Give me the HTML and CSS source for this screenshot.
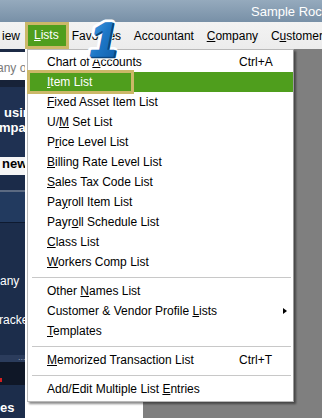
FILE: index.html
```html
<!DOCTYPE html>
<html>
<head>
<meta charset="utf-8">
<link rel="stylesheet" href="styles.css">
</head>
<body>
<div class="titlebar">Sample Rock Castle Construction</div>
<div class="menubar">
  <span class="mi first">iew</span>
  <span class="mi active"><u>L</u>ists</span>
  <span class="mi">Favorites</span>
  <span class="mi">Accountant</span>
  <span class="mi"><u>C</u>ompany</span>
  <span class="mi">C<u>u</u>stomers</span>
</div>
<div class="main">
  <div class="sidebar">
    <div class="sb-top"></div>
    <div class="sb-search">any o</div>
    <div class="sb-dark1"></div>
    <div class="sb-blue"><div class="l1">using</div><div class="l2">mpany</div></div>
    <div class="sb-new">new</div>
    <div class="sb-a"></div>
    <div class="sb-line1"></div>
    <div class="sb-b"></div>
    <div class="sb-line2"></div>
    <div class="sb-c"><div class="t1">any</div><div class="t2">racker</div></div>
    <div class="sb-strip"><span class="dots">...</span></div>
    <div class="sb-dark2"><span class="red"></span></div>
    <div class="sb-d">es</div>
  </div>
  <div class="content"></div>
</div>

<div class="dropdown">
  <div class="row"><span class="lbl">Chart of <u>A</u>ccounts</span><span class="sc">Ctrl+A</span></div>
  <div class="row sel"><span class="lbl"><u>I</u>tem List</span></div>
  <div class="row"><span class="lbl"><u>F</u>ixed Asset Item List</span></div>
  <div class="row"><span class="lbl">U/<u>M</u> Set List</span></div>
  <div class="row"><span class="lbl">P<u>r</u>ice Level List</span></div>
  <div class="row"><span class="lbl"><u>B</u>illing Rate Level List</span></div>
  <div class="row"><span class="lbl"><u>S</u>ales Tax Code List</span></div>
  <div class="row"><span class="lbl">Pa<u>y</u>roll Item List</span></div>
  <div class="row"><span class="lbl">Payr<u>o</u>ll Schedule List</span></div>
  <div class="row"><span class="lbl"><u>C</u>lass List</span></div>
  <div class="row"><span class="lbl"><u>W</u>orkers Comp List</span></div>
  <div class="sep"></div>
  <div class="row"><span class="lbl">Other <u>N</u>ames List</span></div>
  <div class="row"><span class="lbl wide">Customer &amp; Vendor Profile <u>L</u>ists</span><span class="arrow"></span></div>
  <div class="row"><span class="lbl"><u>T</u>emplates</span></div>
  <div class="sep"></div>
  <div class="row"><span class="lbl"><u>M</u>emorized Transaction List</span><span class="sc">Ctrl+T</span></div>
  <div class="sep"></div>
  <div class="row"><span class="lbl wide">Add/Edit Multiple List <u>E</u>ntries</span></div>
  <div class="callout"></div>
</div>

<svg class="badge" width="44" height="46" viewBox="0 0 44 46">
  <defs>
    <linearGradient id="bg1" x1="0" y1="0" x2="1" y2="1">
      <stop offset="0" stop-color="#4ea8ec"/>
      <stop offset="0.5" stop-color="#1d76c6"/>
      <stop offset="1" stop-color="#0e5ca8"/>
    </linearGradient>
  </defs>
  <text x="19" y="39" text-anchor="middle" class="b-out">1</text>
  <text x="20.5" y="40" text-anchor="middle" class="b-deep">1</text>
  <text x="19" y="39" text-anchor="middle" class="b-face">1</text>
</svg>
</body>
</html>
```
FILE: styles.css
```css
html, body {
  margin: 0;
  padding: 0;
}
body {
  width: 322px;
  height: 418px;
  overflow: hidden;
  position: relative;
  background: #7f7f7f;
  font-family: "Liberation Sans", Arial, sans-serif;
  font-size: 12px;
  color: #000;
}
.titlebar {
  height: 22px;
  line-height: 23px;
  padding-left: 251px;
  background: linear-gradient(#95aabd, #7890a7);
  color: #fff;
  font-size: 13px;
  white-space: nowrap;
  overflow: hidden;
}
.menubar {
  height: 27px;
  background: linear-gradient(#f3f3f3, #ececec);
  display: flex;
  align-items: center;
  white-space: nowrap;
  overflow: hidden;
}
.mi {
  flex: none;
  margin-right: 12.8px;
  line-height: 20px;
}
.mi.first {
  margin-left: 2px;
  margin-right: 5px;
}
.mi.active {
  box-sizing: border-box;
  height: 27px;
  line-height: 21px;
  border: 3px solid #cbb868;
  background: #4f9e1d;
  color: #fff;
  padding: 0 7px 0 6px;
  margin-right: 3px;
}
.main {
  display: flex;
  height: 369px;
}
.sidebar {
  width: 25px;
  flex: none;
  display: flex;
  flex-direction: column;
  overflow: hidden;
  background: #1c2d4b;
  white-space: nowrap;
}
.content {
  width: 118px;
  flex: none;
  background: #fff;
}
.sb-top { height: 3px; background: #1c2a45; flex: none; }
.sb-search {
  height: 28px;
  flex: none;
  background: #fff;
  color: #7a7a7a;
  line-height: 32px;
  text-indent: -3px;
}
.sb-dark1 { height: 7px; flex: none; background: #172238; }
.sb-blue {
  height: 70px;
  flex: none;
  box-sizing: border-box;
  padding-top: 18px;
  background: #1f3152;
  color: #fff;
  font-weight: bold;
  font-size: 13px;
  line-height: 15px;
}
.sb-blue .l1 { padding-left: 4px; }
.sb-blue .l2 { margin-left: -1px; }
.sb-new {
  height: 18px;
  flex: none;
  background: #f5f5f5;
  font-weight: bold;
  font-size: 13px;
  line-height: 13px;
  padding-left: 2px;
}
.sb-a { height: 15px; flex: none; background: #1b2b49; }
.sb-line1 { height: 2px; flex: none; background: #5b6a82; }
.sb-b { height: 30px; flex: none; background: #223a5f; }
.sb-line2 { height: 1px; flex: none; background: #0e1a30; }
.sb-c {
  height: 132px;
  flex: none;
  box-sizing: border-box;
  padding-top: 51px;
  color: #fff;
  font-size: 12px;
  line-height: 14px;
}
.sb-c .t2 { margin-top: 25px; margin-left: -1px; }
.sb-strip {
  height: 7px;
  flex: none;
  background: #2b3c5c;
  color: #9aa6b8;
  font-size: 9px;
  line-height: 4px;
  padding-left: 18px;
}
.sb-dark2 {
  height: 23px;
  flex: none;
  background: #0f1727;
  display: flex;
  align-items: flex-end;
  padding-bottom: 3px;
  box-sizing: border-box;
}
.red { width: 2px; height: 4px; background: #d32020; }
.sb-d {
  flex: 1;
  color: #fff;
  font-weight: bold;
  font-size: 13px;
  line-height: 14px;
  padding-top: 16px;
  box-sizing: border-box;
}
.dropdown {
  position: absolute;
  left: 27px;
  top: 49px;
  width: 265px;
  padding: 2px 0 2px;
  background: #fff;
  border: 1px solid #b9b9b9;
  border-right-color: #9a9a9a;
  box-shadow: 2px 2px 2px rgba(0, 0, 0, 0.45);
}
.row {
  height: 20px;
  display: flex;
  align-items: center;
  padding-left: 19px;
  white-space: nowrap;
}
.lbl {
  width: 192px;
  flex: none;
}
.lbl.wide { width: auto; }
.sc { flex: none; }
.row.sel {
  background: #4f9e1d;
  color: #fff;
  margin-left: 1px;
  padding-left: 18px;
}
.arrow {
  margin-left: auto;
  margin-right: 6px;
  width: 0;
  height: 0;
  border-left: 4px solid #000;
  border-top: 3px solid transparent;
  border-bottom: 3px solid transparent;
}
.sep {
  height: 1px;
  background: #c8c8c8;
  margin: 5px 2px 3px 4px;
}
.callout {
  position: absolute;
  left: -1px;
  top: 20px;
  width: 107px;
  height: 24px;
  box-sizing: border-box;
  border: 3px solid #cbb868;
}
.badge {
  position: absolute;
  left: 84px;
  top: 17px;
}
.badge text {
  font-family: "Liberation Sans", Arial, sans-serif;
  font-weight: bold;
  font-style: italic;
  font-size: 48px;
}
.b-out {
  fill: #fff;
  stroke: #fff;
  stroke-width: 7px;
  stroke-linejoin: round;
}
.b-deep {
  fill: #0a467f;
  stroke: #0a467f;
  stroke-width: 2.5px;
  stroke-linejoin: round;
}
.b-face {
  fill: url(#bg1);
  stroke: url(#bg1);
  stroke-width: 1.5px;
  stroke-linejoin: round;
}
```
